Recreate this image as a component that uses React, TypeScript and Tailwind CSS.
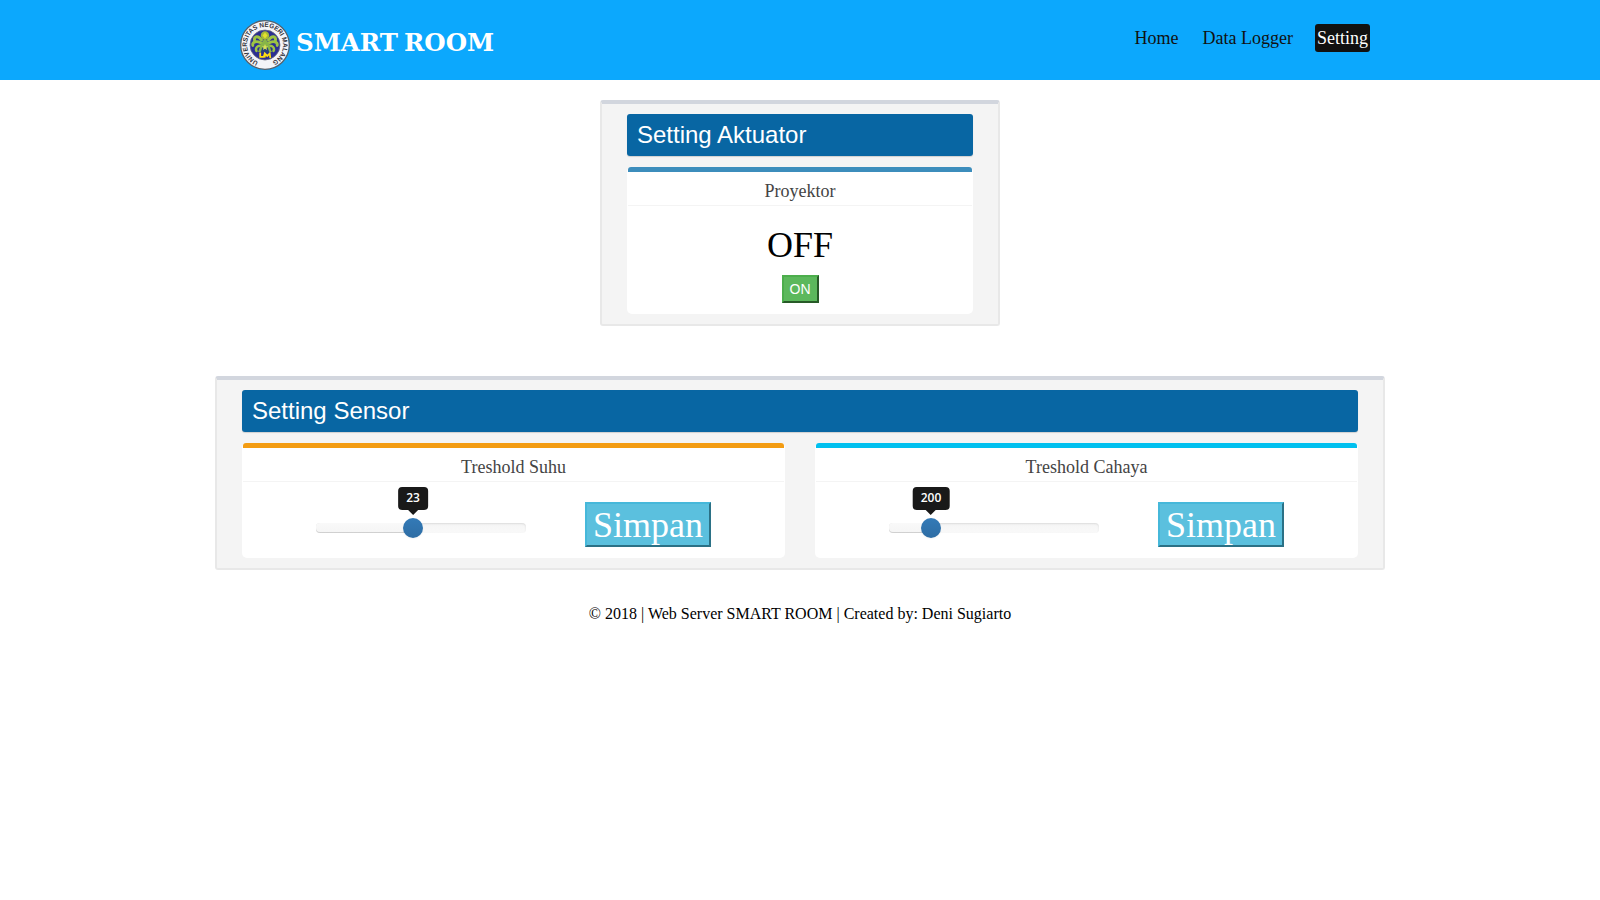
import type { ReactNode } from 'react';

const serif = "font-['Liberation_Serif',serif]";

function Logo() {
  return (
    <svg viewBox="0 0 50 50" className="block h-[50px] w-[50px] shrink-0">
      <defs>
        <path id="ring" d="M18.3 41.7 A18 18 0 1 1 31.7 41.7" fill="none" />
      </defs>
      <circle cx="25" cy="25" r="24.3" fill="#f4f4f8" stroke="#56616c" strokeWidth="1.3" />
      <circle cx="25" cy="25" r="15" fill="#2b2f92" stroke="#6d6f80" strokeWidth="0.8" />
      <text fontSize="6.7" fontWeight="700" fill="#33333b" fontFamily="'Liberation Sans', sans-serif">
        <textPath href="#ring" textLength="98" lengthAdjust="spacingAndGlyphs">UNIVERSITAS NEGERI MALANG</textPath>
      </text>
      <g fill="none" stroke="#9dc443" strokeLinecap="round">
        <path d="M21.500 20C18 15 14 16.500 14.500 20M28.500 20C32 15 36 16.500 35.500 20" strokeWidth="3" />
        <path d="M22 23.500C17 20 12 22 12.800 25.500M28 23.500C33 20 38 22 37.200 25.500" strokeWidth="2.800" />
        <path d="M21.500 26C17.500 25 15 28 16.500 31M28.500 26C32.500 25 35 28 33.500 31" strokeWidth="2.500" />
      </g>
      <path d="M25 19C20 22 20 29 18 32H32C30 29 30 22 25 19Z" fill="#87b548" />
      <circle cx="25" cy="15.500" r="4.200" fill="#a6bb36" />
      <path d="M25 12.500L27.500 15.500L25 18.500L22.500 15.500Z" fill="#e2df30" />
      <path d="M20.500 32.500L22 28.500A3.200 4 0 0 1 28 28.500L29.500 32.500Z" fill="#27437c" />
      <path d="M25 24L26 26.200H28L26.500 27.800L27 30L25 28.800L23 30L23.500 27.800L22 26.200H24Z" fill="#d9e455" />
      <path d="M20.200 32.500V36.800H23.800L24.800 33.500L27.300 36L29.700 33.500L30.300 38M24.800 33.500V37.500" fill="none" stroke="#ffdf12" strokeWidth="1.800" />
    </svg>
  );
}

function Panel({ title, className, children }: { title: string; className: string; children: ReactNode }) {
  return (
    <section className={`mx-auto rounded-[3px] border-2 border-t-4 border-[#e8e8e8] border-t-[#d2d6de] bg-[#f4f4f4] px-[25px] pt-[10px] pb-[10px] ${className}`}>
      <h2 className="mb-[11px] h-[42px] rounded-[3px] bg-[#0866a3] pl-[10px] font-['Liberation_Sans',sans-serif] text-2xl leading-[42px] text-white shadow-[0_1px_1px_rgba(0,0,0,0.15)]">{title}</h2>
      {children}
    </section>
  );
}

function Box({ title, accent, className, children }: { title: string; accent: string; className: string; children: ReactNode }) {
  return (
    <div className={`flex flex-col rounded-[5px] bg-white px-px ${className}`}>
      <div className={`h-[5px] shrink-0 rounded-t-[3px] ${accent}`} />
      <h3 className="h-[34px] shrink-0 border-b border-[#f4f4f4] pt-[6px] text-center text-lg leading-[26px] text-[#444]">{title}</h3>
      {children}
    </div>
  );
}

function Slider({ value, fill }: { value: number; fill: number }) {
  return (
    <div className="relative mt-[41px] ml-[73px] h-[10px] w-[210px] shrink-0 rounded bg-linear-to-b from-[#f5f5f5] to-[#f9f9f9] shadow-[inset_0_1px_2px_rgba(0,0,0,0.1)]">
      <div className="h-full rounded bg-linear-to-b from-[#f9f9f9] to-[#f5f5f5] shadow-[inset_0_-1px_0_rgba(0,0,0,0.15)]" style={{ width: fill }} />
      <div className="absolute -top-[5px] h-5 w-5 -translate-x-1/2 rounded-full bg-linear-to-b from-[#337ab7] to-[#2e6da4] shadow-[0_1px_2px_rgba(0,0,0,0.05)]" style={{ left: fill }} />
      <div className="absolute -top-[36px] flex -translate-x-1/2 flex-col items-center" style={{ left: fill }}>
        <div className="h-[23px] rounded bg-[#191919] px-2 font-['Open_Sans',sans-serif] text-xs leading-[22px] font-semibold text-white">{value}</div>
        <div className="h-0 w-0 border-x-[5px] border-t-[5px] border-x-transparent border-t-[#191919]" />
      </div>
    </div>
  );
}

function Threshold({ title, accent, value, fill }: { title: string; accent: string; value: number; fill: number }) {
  return (
    <Box title={title} accent={accent} className="h-[115px] w-[543px]">
      <div className="flex items-start">
        <Slider value={value} fill={fill} />
        <button className="mt-5 ml-[59px] h-[45px] w-[126px] border-2 border-[#46b8da] bg-[#5bc0de] pt-px text-center text-4xl leading-[40px] text-white [border-style:outset]">Simpan</button>
      </div>
    </Box>
  );
}

export default function App() {
  return (
    <div className={`min-h-screen bg-white text-black ${serif}`}>
      <header className="flex h-20 items-start justify-between bg-[#0ca8fd] pr-[230px] pl-[240px]">
        <div className="flex pt-5">
          <Logo />
          <h1 className="ml-[6px] font-['DejaVu_Serif',serif] text-[24.5px] leading-[46px] font-bold text-white [word-spacing:-2.5px]">SMART ROOM</h1>
        </div>
        <nav className="mt-6 flex gap-5 text-lg leading-7 text-[#111]">
          <a className="px-[2px]">Home</a>
          <a className="px-[2px]">Data Logger</a>
          <a className="rounded-[3px] bg-[#111] px-[2px] text-white">Setting</a>
        </nav>
      </header>
      <main className="pt-5">
        <Panel title="Setting Aktuator" className="w-[400px]">
          <Box title="Proyektor" accent="bg-[#3c8dbc]" className="h-[147px] items-stretch">
            <div className="flex flex-col items-center">
              <p className="mt-[19px] h-[50px] text-4xl leading-[40px]">OFF</p>
              <button className="h-7 w-[37px] border-2 border-[#4cae4c] bg-[#5cb85c] text-center font-['Liberation_Sans',sans-serif] text-sm leading-6 text-white [border-style:outset]">ON</button>
            </div>
          </Box>
        </Panel>
        <Panel title="Setting Sensor" className="mt-[50px] w-[1170px]">
          <div className="flex justify-between">
            <Threshold title="Treshold Suhu" accent="bg-[#f39c12]" value={23} fill={97} />
            <Threshold title="Treshold Cahaya" accent="bg-[#00c0ef]" value={200} fill={42} />
          </div>
        </Panel>
      </main>
      <footer className="mt-[33px] text-center text-base leading-[22px]">© 2018 | Web Server SMART ROOM | Created by: Deni Sugiarto</footer>
    </div>
  );
}
